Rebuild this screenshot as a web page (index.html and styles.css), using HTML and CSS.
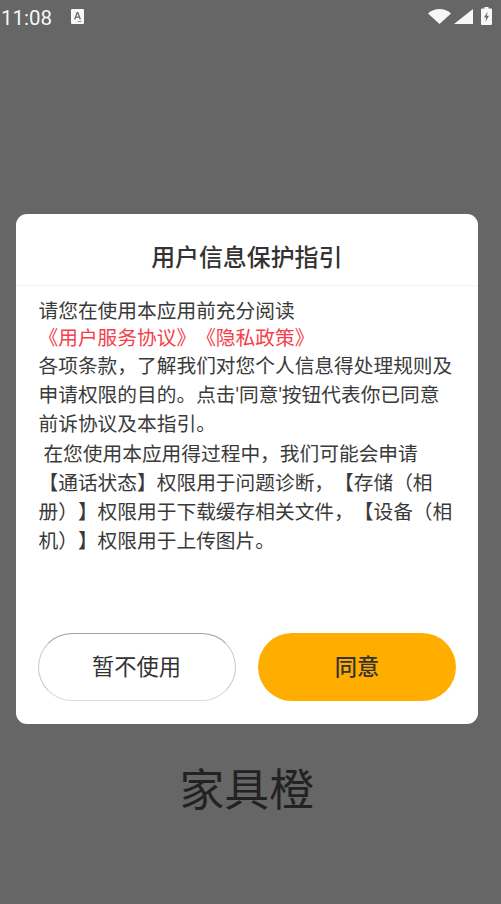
FILE: index.html
```html
<!DOCTYPE html>
<html lang="zh">
<head>
<meta charset="utf-8">
<title>用户信息保护指引</title>
<link rel="stylesheet" href="styles.css">
</head>
<body>
<div class="screen">
  <header class="status">
    <div class="status-left">
      <span class="time">11:08</span>
      <svg class="a-icon" width="13" height="15" viewBox="0 0 13 15"><rect width="13" height="15" rx="1" fill="#f7f7f7"/><path d="M3 10.500L5.700 3h1.600L10 10.500H8.600L8 8.800H5L4.400 10.500zM5.400 7.600h2.200L6.500 4.400z" fill="#666"/><rect x="6.500" y="12" width="4" height="1" fill="#999"/></svg>
    </div>
    <div class="status-right">
      <svg class="wifi" width="23" height="15" viewBox="0 0 23 15"><path d="M0 4.500C3 1.700 7 0 11.500 0S20 1.700 23 4.500L11.500 15z" fill="#f7f7f7"/></svg>
      <svg class="signal" width="19" height="15" viewBox="0 0 19 15"><path d="M0 15L19 0V15z" fill="#f7f7f7"/></svg>
      <svg class="battery" width="11" height="18" viewBox="0 0 11 18"><path fill-rule="evenodd" d="M3.500 0h4v1.500H10a1 1 0 0 1 1 1V17a1 1 0 0 1-1 1H1a1 1 0 0 1-1-1V2.500a1 1 0 0 1 1-1h2.500zM6.800 4.500L3 10.500h2.300L4.300 15 8 8.800H5.700z" fill="#f7f7f7"/></svg>
    </div>
  </header>

  <main class="stage">
    <section class="dialog">
      <h1 class="title">用户信息保护指引</h1>
      <div class="body">
        <p class="intro">请您在使用本应用前充分阅读</p>
        <p class="intro links">《用户服务协议》《隐私政策》</p>
        <p>各项条款，了解我们对您个人信息得处理规则及申请权限的目的。点击'同意'按钮代表你已同意前诉协议及本指引。</p>
        <p>&nbsp;在您使用本应用得过程中，我们可能会申请【通话状态】权限用于问题诊断，【存储（相册）】权限用于下载缓存相关文件，【设备（相机）】权限用于上传图片。</p>
      </div>
      <div class="actions">
        <button class="btn btn-ghost">暂不使用</button>
        <button class="btn btn-primary">同意</button>
      </div>
    </section>
    <div class="brand">家具橙</div>
  </main>
</div>
</body>
</html>
```
FILE: styles.css
```css
* { box-sizing: border-box; }
html, body { margin: 0; padding: 0; }
body {
  font-family: "Roboto", "Noto Sans CJK SC", sans-serif;
  text-spacing-trim: space-all;
}
.screen {
  width: 501px;
  height: 904px;
  background: #666;
  overflow: hidden;
  display: flex;
  flex-direction: column;
}
.status {
  height: 36px;
  display: flex;
  justify-content: space-between;
  align-items: center;
  padding: 0 9px 0 1px;
  flex: none;
}
.status-left { display: flex; align-items: center; gap: 19px; }
.time { font-size: 20.500px; color: #f7f7f7; line-height: 36px; }
.a-icon { margin-top: -3px; }
.status-right { display: flex; align-items: center; gap: 3px; }
.wifi, .signal { margin-top: -3px; }
.battery { margin-left: 5px; margin-top: -4px; }
.stage {
  flex: 1;
  padding: 178px 23px 0 15.500px;
}
.dialog {
  height: 510px;
  background: #fff;
  border-radius: 11px;
  display: flex;
  flex-direction: column;
}
.title {
  margin: 0;
  height: 72px;
  border-bottom: 1px solid #f2f2f2;
  font-size: 23.900px;
  font-weight: 500;
  line-height: 88px;
  text-align: center;
  color: #333;
}
.body {
  flex: 1;
  padding: 12px 23px 0;
  font-size: 19.720px;
  line-height: 29.200px;
  color: #3a3a3a;
}
.body p { margin: 0; }
.body .intro { line-height: 27px; }
.links { color: #f5404a; }
.actions {
  display: flex;
  justify-content: space-between;
  padding: 0 22px 23px;
}
.btn {
  width: 198px;
  height: 68px;
  border-radius: 34px;
  font-family: inherit;
  font-size: 22.250px;
  color: #333;
  padding: 0 0 4px;
}
.btn-ghost {
  background: #fff;
  border: 1px solid #c8c8c8;
  border-top-color: #a0a0a0;
  border-bottom-color: #dcdcdc;
}
.btn-primary { background: #ffae00; border: 0; font-weight: 500; }
.brand {
  margin-top: 38px;
  text-align: center;
  font-size: 44.800px;
  line-height: 58px;
  color: #222;
}
```
